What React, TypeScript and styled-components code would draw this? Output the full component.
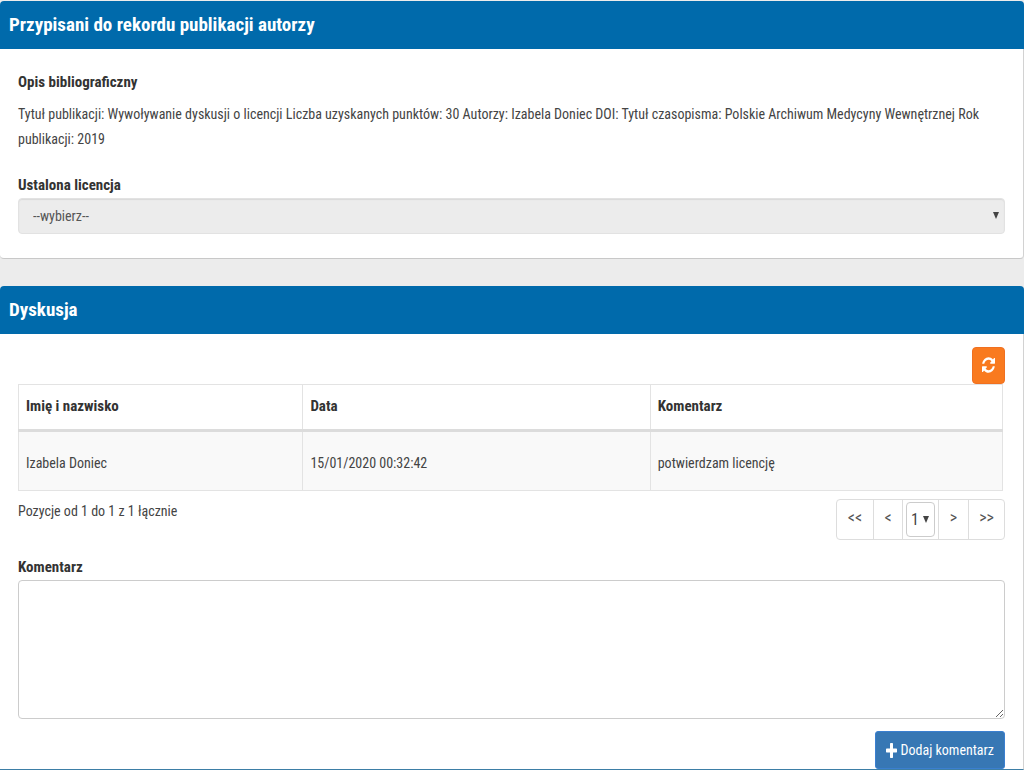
import React from "react";
import styled, { createGlobalStyle } from "styled-components";

const GlobalStyle = createGlobalStyle`
  * { box-sizing: border-box; }
  body {
    margin: 0;
    background: #ececec;
    color: #444;
    font-family: "Roboto Condensed", "Arial Narrow", "Liberation Sans", sans-serif;
    font-size: 14px;
    line-height: 25px;
  }
  button, select, textarea { font: inherit; color: inherit; }
`;

const Page = styled.main`
  display: flex;
  flex-direction: column;
  gap: 27px;
  padding-top: 1px;
`;

const Panel = styled.section`
  background: #fff;
  border-right: 1px solid #d2d2d2;
  border-bottom: 1px solid #c8c8c8;
  border-radius: 4px;
  &:last-child {
    border-bottom-color: #3d7ea6;
    border-radius: 4px 4px 0 0;
  }
`;

const PanelTitle = styled.h2`
  margin: 0 -1px 0 0;
  padding: 12px 9px;
  border-radius: 4px 4px 0 0;
  background: #006aab;
  color: #fff;
  font-size: 19px;
  line-height: 24px;
  font-weight: bold;
`;

const PanelBody = styled.div<{ $top: number; $bottom: number }>`
  padding: ${(p) => p.$top}px 18px ${(p) => p.$bottom}px;
`;

const Caption = styled.h3`
  margin: 0 0 8px;
  color: #333;
  font-size: 15px;
  line-height: 24px;
`;

const Description = styled.p`
  margin: 0 0 21px;
`;

const Label = styled.label`
  display: block;
  padding-bottom: 1px;
  color: #333;
  font-size: 15px;
  font-weight: bold;
  line-height: 24px;
`;

const SelectWrap = styled.div`
  position: relative;
`;

const Select = styled.select`
  appearance: none;
  display: block;
  width: 100%;
  height: 36px;
  padding: 0 14px;
  border: 1px solid #e2e2e2;
  border-radius: 4px;
  background: #ececec;
  box-shadow: inset 0 1px 1px rgba(0, 0, 0, 0.08);
  color: #555;
  opacity: 1;
`;

const Arrow = styled.svg<{ $right: number }>`
  position: absolute;
  top: 50%;
  right: ${(p) => p.$right}px;
  width: 6px;
  height: 7px;
  margin-top: -4px;
  fill: #444;
  pointer-events: none;
`;

const Toolbar = styled.div`
  display: flex;
  justify-content: flex-end;
`;

const RefreshButton = styled.button`
  display: grid;
  place-items: center;
  width: 33px;
  height: 37px;
  padding: 0 0 2px;
  border: 1px solid #f07020;
  border-radius: 4px;
  background: #f97a1f;
  color: #fff;
`;

const Icon = styled.svg<{ $w: number; $h: number }>`
  width: ${(p) => p.$w}px;
  height: ${(p) => p.$h}px;
  fill: currentColor;
`;

const TableWrap = styled.div`
  padding-right: 2px;
`;

const Table = styled.table`
  width: 100%;
  border-collapse: collapse;
  table-layout: fixed;
`;

const Th = styled.th<{ $width?: string }>`
  width: ${(p) => p.$width || "auto"};
  height: 46px;
  padding: 0 7px 2px;
  border: 1px solid #e3e3e3;
  border-bottom: 3px solid #dcdcdc;
  color: #333;
  font-size: 15px;
  text-align: left;
`;

const Td = styled.td`
  height: 60px;
  padding: 4px 7px 0;
  border: 1px solid #e3e3e3;
  background: #f9f9f9;
`;

const TableFooter = styled.div`
  display: flex;
  justify-content: space-between;
  align-items: flex-start;
  padding-top: 8px;
  margin-bottom: 15px;
`;

const Pager = styled.nav`
  display: flex;
  height: 41px;
  border: 1px solid #ddd;
  border-radius: 4px;
`;

const PagerButton = styled.button<{ $wide?: boolean }>`
  width: ${(p) => (p.$wide ? 36 : 29)}px;
  padding: 0 0 4px;
  border: 0;
  background: none;
  color: #555;
  font-size: 16px;
  & + & { border-left: 1px solid #ddd; }
`;

const PageSelectWrap = styled.div`
  position: relative;
  width: 37px;
  padding: 2px 3px;
  border: solid #ddd;
  border-width: 0 1px;
`;

const PageSelect = styled.select`
  appearance: none;
  display: block;
  width: 100%;
  height: 35px;
  padding: 0 4px;
  border: 1px solid #ccc;
  border-radius: 4px;
  background: #fff;
  font-size: 16px;
`;

const Comment = styled.textarea`
  display: block;
  width: 100%;
  height: 139px;
  padding: 6px 12px;
  border: 1px solid #ccc;
  border-radius: 4px;
  background: #fff;
  resize: vertical;
`;

const Actions = styled.div`
  display: flex;
  justify-content: flex-end;
  padding-top: 12px;
`;

const AddButton = styled.button`
  display: flex;
  align-items: center;
  gap: 3px;
  height: 38px;
  padding: 0 10px;
  border: 1px solid #3a7fd0;
  border-radius: 3px;
  background: #3777b4;
  color: #fff;
`;

const ArrowDown = ({ right }: { right: number }) => (
  <Arrow $right={right} viewBox="0 0 6 7" aria-hidden="true">
    <path d="M0 0h6L3 7z" />
  </Arrow>
);

export default function App() {
  return (
    <>
      <GlobalStyle />
      <Page>
        <Panel>
          <PanelTitle>Przypisani do rekordu publikacji autorzy</PanelTitle>
          <PanelBody $top={21} $bottom={24}>
            <Caption>Opis bibliograficzny</Caption>
            <Description>
              Tytuł publikacji: Wywoływanie dyskusji o licencji Liczba uzyskanych punktów: 30
              Autorzy: Izabela Doniec DOI: Tytuł czasopisma: Polskie Archiwum Medycyny
              Wewnętrznej Rok publikacji: 2019
            </Description>
            <Label htmlFor="licence">Ustalona licencja</Label>
            <SelectWrap>
              <Select id="licence" disabled>
                <option>--wybierz--</option>
              </Select>
              <ArrowDown right={6} />
            </SelectWrap>
          </PanelBody>
        </Panel>

        <Panel>
          <PanelTitle>Dyskusja</PanelTitle>
          <PanelBody $top={13} $bottom={0}>
            <Toolbar>
              <RefreshButton type="button" aria-label="Odśwież">
                <Icon $w={13} $h={18} viewBox="128 0 1536 1792" preserveAspectRatio="none">
                  <path d="M1639 1056q0 5-1 7-64 268-268 434.5t-478 166.5q-146 0-282.5-55t-243.5-157l-129 129q-19 19-45 19t-45-19-19-45v-448q0-26 19-45t45-19h448q26 0 45 19t19 45-19 45l-137 137q71 66 161 102t187 36q134 0 250-65t186-179q11-17 53-117 8-23 30-23h192q13 0 22.5 9.5t9.5 22.5zm25-800v448q0 26-19 45t-45 19h-448q-26 0-45-19t-19-45 19-45l138-138q-148-137-349-137-134 0-250 65t-186 179q-11 17-53 117-8 23-30 23h-199q-13 0-22.5-9.5t-9.5-22.5v-7q65-268 270-434.5t480-166.5q146 0 284 55.5t245 156.5l130-129q19-19 45-19t45 19 19 45z" />
                </Icon>
              </RefreshButton>
            </Toolbar>
            <TableWrap>
              <Table>
                <thead>
                  <tr>
                    <Th $width="28.9%">Imię i nazwisko</Th>
                    <Th $width="35.3%">Data</Th>
                    <Th>Komentarz</Th>
                  </tr>
                </thead>
                <tbody>
                  <tr>
                    <Td>Izabela Doniec</Td>
                    <Td>15/01/2020 00:32:42</Td>
                    <Td>potwierdzam licencję</Td>
                  </tr>
                </tbody>
              </Table>
            </TableWrap>
            <TableFooter>
              <span>Pozycje od 1 do 1 z 1 łącznie</span>
              <Pager aria-label="Strony">
                <PagerButton type="button" $wide>&lt;&lt;</PagerButton>
                <PagerButton type="button">&lt;</PagerButton>
                <PageSelectWrap>
                  <PageSelect aria-label="Strona">
                    <option>1</option>
                  </PageSelect>
                  <ArrowDown right={9} />
                </PageSelectWrap>
                <PagerButton type="button">&gt;</PagerButton>
                <PagerButton type="button" $wide>&gt;&gt;</PagerButton>
              </Pager>
            </TableFooter>
            <Label htmlFor="comment">Komentarz</Label>
            <Comment id="comment" />
            <Actions>
              <AddButton type="button">
                <Icon $w={11} $h={15} viewBox="192 128 1408 1408" preserveAspectRatio="none">
                  <path d="M1600 736v192q0 40-28 68t-68 28h-416v416q0 40-28 68t-68 28h-192q-40 0-68-28t-28-68v-416h-416q-40 0-68-28t-28-68v-192q0-40 28-68t68-28h416v-416q0-40 28-68t68-28h192q40 0 68 28t28 68v416h416q40 0 68 28t28 68z" />
                </Icon>
                Dodaj komentarz
              </AddButton>
            </Actions>
          </PanelBody>
        </Panel>
      </Page>
    </>
  );
}
